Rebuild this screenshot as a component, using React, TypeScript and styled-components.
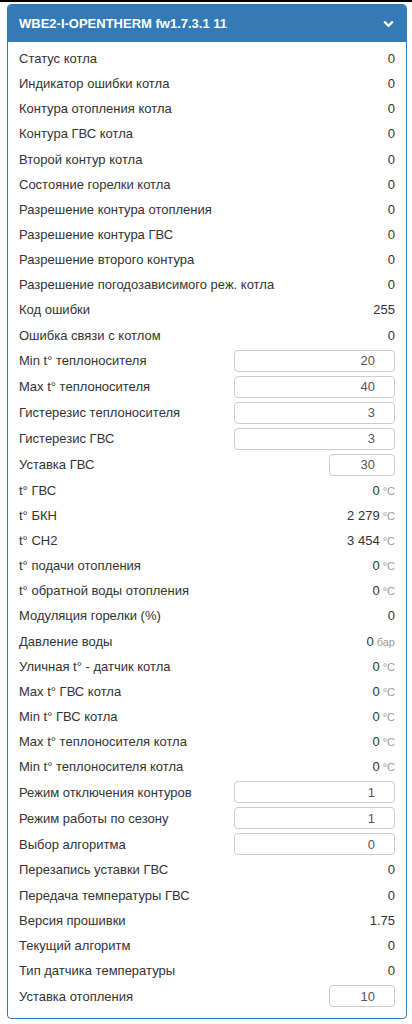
import styled, { createGlobalStyle } from "styled-components";

const GlobalStyle = createGlobalStyle`
  html, body {
    margin: 0;
    padding: 0;
    background: #fff;
  }
  body {
    border-top: 2px solid #000;
    font-family: "Liberation Sans", Arial, sans-serif;
    font-size: 13px;
    color: #333;
  }
`;

const Page = styled.div`
  padding: 2px 5px 6px 7px;
`;

const Panel = styled.div`
  width: 400px;
  border: 1px solid #337ab7;
  border-radius: 4px;
  box-sizing: border-box;
  background: #fff;
`;

const Header = styled.div`
  display: flex;
  align-items: center;
  justify-content: space-between;
  height: 37px;
  padding: 0 12px 0 11px;
  background: #337ab7;
  color: #fff;
  font-weight: bold;
  font-size: 13px;
  border-radius: 3px 3px 0 0;
`;

const Body = styled.div`
  padding: 4px 11px 9px 11px;
`;

const Row = styled.div<{ $tall?: boolean }>`
  display: flex;
  align-items: center;
  justify-content: space-between;
  height: ${(p) => (p.$tall ? "26px" : "25.15px")};
`;

const Label = styled.span`
  white-space: nowrap;
`;

const Value = styled.span`
  color: #333;
`;

const Unit = styled.span`
  color: #999;
  font-size: 11px;
  margin-left: 3px;
`;

const Field = styled.input<{ $short?: boolean }>`
  box-sizing: border-box;
  width: ${(p) => (p.$short ? "66px" : "161px")};
  height: 22px;
  padding: 0 19px 0 6px;
  border: 1px solid #ccc;
  border-radius: 4px;
  font-family: "Liberation Sans", Arial, sans-serif;
  font-size: 13px;
  color: #555;
  text-align: right;
  outline: none;
`;

type Item =
  | { label: string; value: string; unit?: string }
  | { label: string; input: string; short?: boolean };

const items: Item[] = [
  { label: "Статус котла", value: "0" },
  { label: "Индикатор ошибки котла", value: "0" },
  { label: "Контура отопления котла", value: "0" },
  { label: "Контура ГВС котла", value: "0" },
  { label: "Второй контур котла", value: "0" },
  { label: "Состояние горелки котла", value: "0" },
  { label: "Разрешение контура отопления", value: "0" },
  { label: "Разрешение контура ГВС", value: "0" },
  { label: "Разрешение второго контура", value: "0" },
  { label: "Разрешение погодозависимого реж. котла", value: "0" },
  { label: "Код ошибки", value: "255" },
  { label: "Ошибка связи с котлом", value: "0" },
  { label: "Min t° теплоносителя", input: "20" },
  { label: "Max t° теплоносителя", input: "40" },
  { label: "Гистерезис теплоносителя", input: "3" },
  { label: "Гистерезис ГВС", input: "3" },
  { label: "Уставка ГВС", input: "30", short: true },
  { label: "t° ГВС", value: "0", unit: "°C" },
  { label: "t° БКН", value: "2 279", unit: "°C" },
  { label: "t° CH2", value: "3 454", unit: "°C" },
  { label: "t° подачи отопления", value: "0", unit: "°C" },
  { label: "t° обратной воды отопления", value: "0", unit: "°C" },
  { label: "Модуляция горелки (%)", value: "0" },
  { label: "Давление воды", value: "0", unit: "бар" },
  { label: "Уличная t° - датчик котла", value: "0", unit: "°C" },
  { label: "Max t° ГВС котла", value: "0", unit: "°C" },
  { label: "Min t° ГВС котла", value: "0", unit: "°C" },
  { label: "Max t° теплоносителя котла", value: "0", unit: "°C" },
  { label: "Min t° теплоносителя котла", value: "0", unit: "°C" },
  { label: "Режим отключения контуров", input: "1" },
  { label: "Режим работы по сезону", input: "1" },
  { label: "Выбор алгоритма", input: "0" },
  { label: "Перезапись уставки ГВС", value: "0" },
  { label: "Передача температуры ГВС", value: "0" },
  { label: "Версия прошивки", value: "1.75" },
  { label: "Текущий алгоритм", value: "0" },
  { label: "Тип датчика температуры", value: "0" },
  { label: "Уставка отопления", input: "10", short: true },
];

const Chevron = () => (
  <svg width="11" height="8" viewBox="0 0 11 8">
    <path d="M1.2 1.5 L5.5 5.8 L9.8 1.5" fill="none" stroke="#fff" strokeWidth="2.4" />
  </svg>
);

const App = () => {
  return (
    <Page>
      <GlobalStyle />
      <Panel>
        <Header>
          <span>WBE2-I-OPENTHERM fw1.7.3.1 11</span>
          <Chevron />
        </Header>
        <Body>
          {items.map((it) =>
            "input" in it ? (
              <Row key={it.label} $tall>
                <Label>{it.label}</Label>
                <Field $short={it.short} defaultValue={it.input} />
              </Row>
            ) : (
              <Row key={it.label}>
                <Label>{it.label}</Label>
                <Value>
                  {it.value}
                  {it.unit && <Unit>{it.unit}</Unit>}
                </Value>
              </Row>
            )
          )}
        </Body>
      </Panel>
    </Page>
  );
};

export default App;
